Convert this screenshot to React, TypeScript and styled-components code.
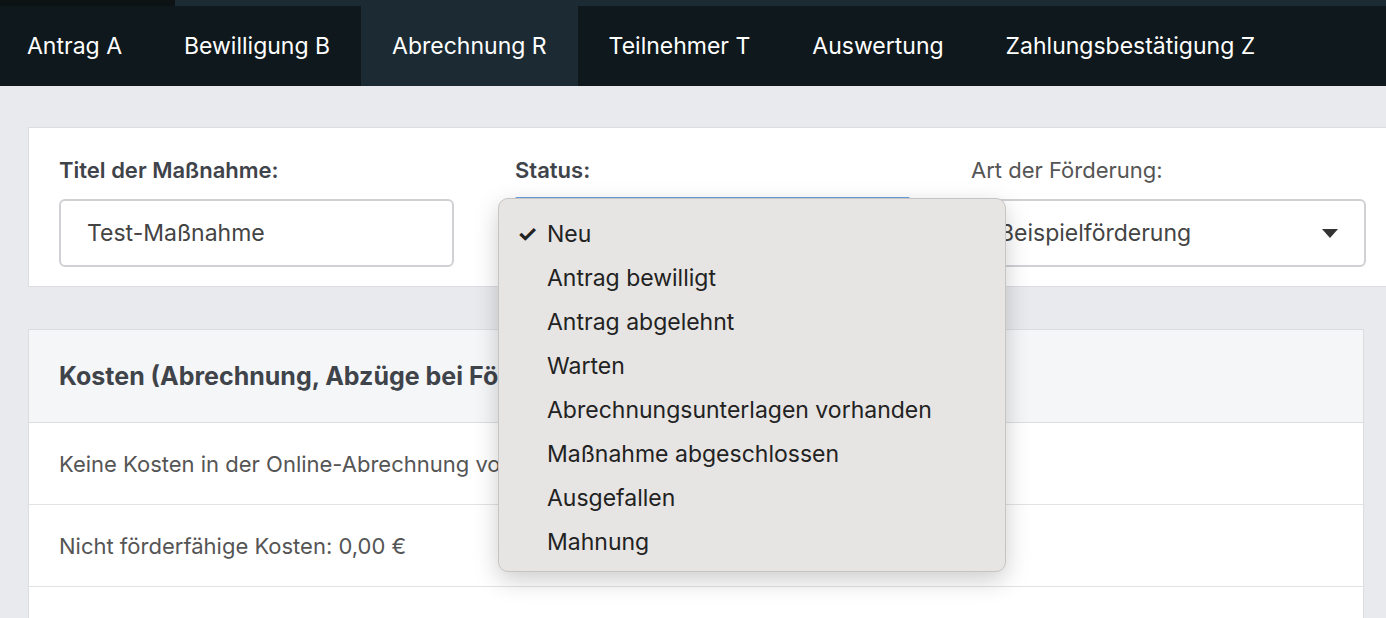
import React from "react";
import styled, { createGlobalStyle } from "styled-components";

const Global = createGlobalStyle`
  html, body { margin: 0; padding: 0; background: #e9eaed; font-family: Inter, Roboto, "Liberation Sans", sans-serif; overflow: hidden; }
`;
const Page = styled.div`width: 1386px; height: 618px; overflow: hidden; position: relative;`;
const TopStrip = styled.div`height: 6px; display: flex;`;
const StripSeg = styled.div<{ $w?: number; $c: string }>`
  background: ${p => p.$c}; ${p => (p.$w ? `width:${p.$w}px;` : "flex:1;")}
`;
const Nav = styled.nav`height: 80px; background: #0f181c; display: flex; padding-left: 0;`;
const Tab = styled.div<{ $active?: boolean }>`
  display: flex; align-items: center; padding: 0 31px; color: #fff; font-size: 23px; white-space: nowrap;
  background: ${p => (p.$active ? "#1c2b33" : "transparent")};
  &:first-child { padding-left: 27px; }
`;
const Content = styled.div`padding: 41px 0 0 28px; display: flex; flex-direction: column; gap: 42px;`;
const Card = styled.div`background: #fff; border: 1px solid #dcdde0; border-right: none;`;
const FormRow = styled.div`display: grid; grid-template-columns: 395px 395px 395px; column-gap: 61px; padding: 28px 0 20px 30px; height: 158px; box-sizing: border-box;`;
const Field = styled.div`display: flex; flex-direction: column; gap: 15px;`;
const Label = styled.label<{ $bold?: boolean }>`font-size: 22px; line-height: 28px; color: ${p => (p.$bold ? "#3f434a" : "#555")}; font-weight: ${p => (p.$bold ? 600 : 400)};`;
const Input = styled.div`height: 68px; box-sizing: border-box; border: 2px solid #cfd1d4; border-radius: 6px; display: flex; align-items: center; justify-content: space-between; padding: 0 26px; font-size: 23px; color: #444;`;
const Caret = styled.span`width:0;height:0;border-left:8px solid transparent;border-right:8px solid transparent;border-top:9px solid #333;`;
const Card2 = styled(Card)`margin-right: 22px; border-right: 1px solid #dcdde0;`;
const CardHead = styled.div`height: 92px; background: #f5f6f7; border-bottom: 1px solid #dcdde0; display: flex; align-items: center; padding-left: 30px; font-size: 25px; font-weight: 700; color: #3f434a; white-space: nowrap;`;
const Row = styled.div`height: 81px; border-bottom: 1px solid #e2e3e5; display: flex; align-items: center; padding-left: 30px; font-size: 22px; color: #555; white-space: nowrap;`;
const Menu = styled.div`position: absolute; left: 498px; top: 198px; width: 508px; height: 374px; box-sizing: border-box; background: #e6e5e3; border: 1px solid #c6c5c3; border-radius: 10px; box-shadow: 0 8px 24px rgba(0,0,0,0.2); padding-top: 13px;`;
const Item = styled.div`height: 44px; display: flex; align-items: center; font-size: 23px; color: #222; padding-left: 48px; position: relative; white-space: nowrap;`;
const Check = styled.span`position: absolute; left: 18px; font-size: 23px; font-weight: 700;`;
const FocusLine = styled.div`position: absolute; left: 515px; top: 197px; width: 395px; height: 3px; background: #6a9fe0; border-radius: 3px;`;

const items = ["Neu","Antrag bewilligt","Antrag abgelehnt","Warten","Abrechnungsunterlagen vorhanden","Maßnahme abgeschlossen","Ausgefallen","Mahnung"];

export default function App() {
  return (
    <Page>
      <Global />
      <TopStrip><StripSeg $w={175} $c="#0d1215" /><StripSeg $c="#1c2b33" /></TopStrip>
      <Nav>
        {["Antrag A","Bewilligung B","Abrechnung R","Teilnehmer T","Auswertung","Zahlungsbestätigung Z"].map(t => (
          <Tab key={t} $active={t === "Abrechnung R"}>{t}</Tab>
        ))}
      </Nav>
      <Content>
        <Card>
          <FormRow>
            <Field><Label $bold>Titel der Maßnahme:</Label><Input>Test-Maßnahme</Input></Field>
            <Field><Label $bold>Status:</Label><Input /></Field>
            <Field><Label>Art der Förderung:</Label><Input>Beispielförderung<Caret /></Input></Field>
          </FormRow>
        </Card>
        <Card2>
          <CardHead>Kosten (Abrechnung, Abzüge bei Förderung)</CardHead>
          <Row>Keine Kosten in der Online-Abrechnung vorhanden.</Row>
          <Row>Nicht förderfähige Kosten: 0,00 €</Row>
          <Row />
        </Card2>
      </Content>
      <FocusLine />
      <Menu>
        {items.map((t, i) => <Item key={t}>{i === 0 && <Check>✓</Check>}{t}</Item>)}
      </Menu>
    </Page>
  );
}
